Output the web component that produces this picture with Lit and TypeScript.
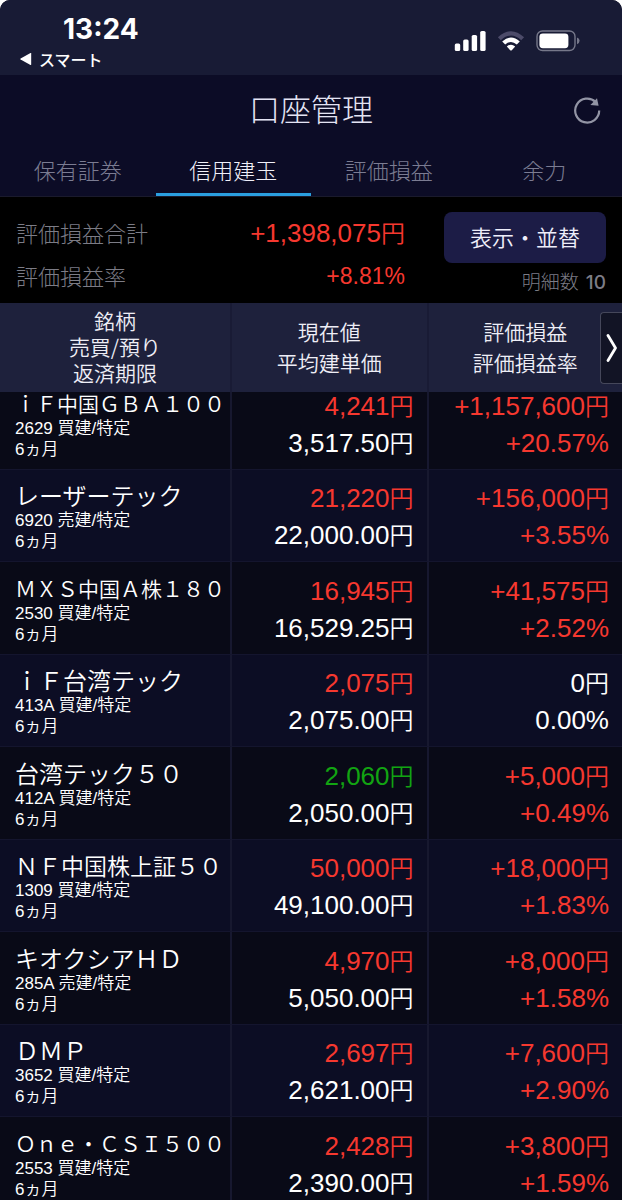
import { LitElement, html, css } from "lit";
import { customElement, property, state } from "lit/decorators.js";
import { classMap } from "lit/directives/class-map.js";

type Tone = "up" | "down" | "flat";

interface Position {
  name: string;
  code: string;
  side: string;
  term: string;
  price: string;
  priceTone: Tone;
  cost: string;
  gain: string;
  rate: string;
  gainTone: Tone;
}

const row = (
  name: string,
  code: string,
  side: string,
  price: string,
  priceTone: Tone,
  cost: string,
  gain: string,
  rate: string,
  gainTone: Tone
): Position => ({ name, code, side, term: "6ヵ月", price, priceTone, cost, gain, rate, gainTone });

const POSITIONS: Position[] = [
  row("ｉＦ中国ＧＢＡ１００", "2629", "買建/特定", "4,241", "up", "3,517.50", "+1,157,600", "+20.57%", "up"),
  row("レーザーテック", "6920", "売建/特定", "21,220", "up", "22,000.00", "+156,000", "+3.55%", "up"),
  row("ＭＸＳ中国Ａ株１８０", "2530", "買建/特定", "16,945", "up", "16,529.25", "+41,575", "+2.52%", "up"),
  row("ｉＦ台湾テック", "413A", "買建/特定", "2,075", "up", "2,075.00", "0", "0.00%", "flat"),
  row("台湾テック５０", "412A", "買建/特定", "2,060", "down", "2,050.00", "+5,000", "+0.49%", "up"),
  row("ＮＦ中国株上証５０", "1309", "買建/特定", "50,000", "up", "49,100.00", "+18,000", "+1.83%", "up"),
  row("キオクシアＨＤ", "285A", "売建/特定", "4,970", "up", "5,050.00", "+8,000", "+1.58%", "up"),
  row("ＤＭＰ", "3652", "買建/特定", "2,697", "up", "2,621.00", "+7,600", "+2.90%", "up"),
  row("Ｏｎｅ・ＣＳＩ５００", "2553", "買建/特定", "2,428", "up", "2,390.00", "+3,800", "+1.59%", "up"),
];

const TABS = ["保有証券", "信用建玉", "評価損益", "余力"];

@customElement("status-bar")
class StatusBar extends LitElement {
  static styles = css`
    :host {
      display: flex;
      justify-content: space-between;
      box-sizing: border-box;
      height: 75px;
      padding: 13px 42px 0 20px;
      background: #181b35;
      color: #fff;
    }
    .time {
      padding-left: 43px;
      font: 700 28px/32px Inter, "Liberation Sans", sans-serif;
    }
    .back {
      display: flex;
      align-items: center;
      gap: 6px;
      color: inherit;
      text-decoration: none;
      font: 500 16px/28px "Noto Sans CJK JP", sans-serif;
    }
    .icons {
      display: flex;
      align-items: center;
      gap: 11px;
      height: 56px;
    }
  `;

  render() {
    return html`
      <div>
        <div class="time">13:24</div>
        <a class="back" href="#">
          <svg width="13" height="12" viewBox="0 0 13 12" fill="#fff" aria-hidden="true">
            <path d="M11.2.4v11.2q0 .6-.7.3L.6 6.5Q0 6 .6 5.5L10.5.1q.7-.3.7.3z" />
          </svg>
          スマート
        </a>
      </div>
      <div class="icons">
        <svg width="32" height="20" viewBox="0 0 32 20" fill="#fff" aria-hidden="true">
          <rect x="0.8" y="12.5" width="5.4" height="7.5" rx="1.6" />
          <rect x="9.2" y="8.5" width="5.4" height="11.5" rx="1.6" />
          <rect x="17.7" y="4" width="5.4" height="16" rx="1.6" />
          <rect x="26.2" y="0" width="5.4" height="20" rx="1.6" />
        </svg>
        <svg width="28" height="20" viewBox="0 0 28 20" aria-hidden="true">
          <path d="M.9 6.2Q14-5.9 27.1 6.2L24.2 9.2Q14.1-.1 3.8 9.2z" fill="#4c4b69" />
          <path d="M5.2 10.5Q14 2.6 22.8 10.5L19.8 13.5Q14 8.4 8.2 13.5z" fill="#fff" />
          <path d="M9.8 15.4Q14 12 18.2 15.4L14.8 19.2Q14 19.9 13.2 19.2z" fill="#fff" />
        </svg>
        <svg width="44" height="22" viewBox="0 0 44 22" fill="none" aria-hidden="true">
          <rect x="1" y="1" width="38" height="19.5" rx="5.5" stroke="#76788a" stroke-width="1.4" />
          <rect x="3.4" y="3.4" width="29" height="14.8" rx="3.4" fill="#fff" />
          <path d="M41 7.4Q43.6 8.4 43.6 10.8T41 14.2z" fill="#76788a" />
        </svg>
      </div>
    `;
  }
}

@customElement("position-table")
class PositionTable extends LitElement {
  @property({ attribute: false }) positions: Position[] = [];

  static styles = css`
    :host {
      display: block;
      position: relative;
    }
    .grid {
      width: 100%;
      table-layout: fixed;
      border-collapse: separate;
      border-spacing: 0;
    }
    .name-col {
      width: 37.3%;
    }
    .price-col {
      width: 31.6%;
    }
    th,
    td {
      box-sizing: border-box;
      border-right: 2px solid #17182f;
    }
    th:last-child,
    td:last-child {
      border-right: 0;
    }
    th {
      height: 89px;
      padding: 0 0 2px;
      background: #1e213c;
      border-color: #191b35;
      color: #eeeef6;
      font-weight: 350;
      font-size: 21px;
      line-height: 31px;
      text-align: center;
    }
    th.tight {
      padding-bottom: 4px;
      line-height: 26px;
    }
    td {
      height: 93px;
      padding: 0 13px 9px 15px;
      vertical-align: bottom;
      background: #090a17;
      border-bottom: 1px solid #14152e;
      color: #fff;
    }
    tr:nth-child(even) td {
      height: 92px;
      background: #0c0d24;
    }
    tr:first-child td {
      height: 78px;
    }
    .name {
      margin-bottom: 5px;
      font-size: 24px;
      line-height: 20px;
      white-space: nowrap;
    }
    .name.long {
      font-size: 23px;
    }
    .name.longest {
      font-size: 21px;
    }
    .meta {
      font-size: 17px;
      line-height: 21px;
      font-family: "Liberation Sans", "Noto Sans CJK JP", sans-serif;
    }
    .num {
      padding-bottom: 13px;
      text-align: right;
      font-family: "Liberation Sans", "Noto Sans CJK JP", sans-serif;
      font-size: 26px;
      line-height: 26px;
    }
    .amount {
      margin-bottom: 11px;
    }
    .amount:last-child {
      margin-bottom: 0;
    }
    .yen {
      font-size: 24px;
      line-height: 20px;
    }
    .up {
      color: #f6382f;
    }
    .down {
      color: #12a412;
    }
    .next {
      position: absolute;
      top: 9px;
      right: 0;
      display: flex;
      align-items: center;
      justify-content: center;
      width: 22px;
      height: 72px;
      padding: 0;
      border: 1px solid #45475a;
      border-right: 0;
      border-radius: 4px 0 0 4px;
      background: #121425;
    }
  `;

  private amount(value: string, tone: Tone) {
    return html`<div class=${classMap({ amount: true, [tone]: true })}>${value}<span class="yen">円</span></div>`;
  }

  render() {
    return html`
      <table class="grid">
        <thead>
          <tr>
            <th class="name-col tight" scope="col">銘柄<br />売買/預り<br />返済期限</th>
            <th class="price-col" scope="col">現在値<br />平均建単価</th>
            <th scope="col">評価損益<br />評価損益率</th>
          </tr>
        </thead>
        <tbody>
          ${this.positions.map(
            (p) => html`
              <tr>
                <td>
                  <div class=${classMap({ name: true, long: p.name.length === 9, longest: p.name.length > 9 })}>
                    ${p.name}
                  </div>
                  <div class="meta">${p.code} ${p.side}</div>
                  <div class="meta">${p.term}</div>
                </td>
                <td class="num">${this.amount(p.price, p.priceTone)}${this.amount(p.cost, "flat")}</td>
                <td class="num">
                  ${this.amount(p.gain, p.gainTone)}
                  <div class=${p.gainTone}>${p.rate}</div>
                </td>
              </tr>
            `
          )}
        </tbody>
      </table>
      <button class="next" aria-label="次の列">
        <svg width="12" height="28" viewBox="0 0 12 28" fill="none" aria-hidden="true">
          <path d="M2 1.5L9.5 14L2 26.5" stroke="#fff" stroke-width="2.8" stroke-linejoin="round" stroke-linecap="round" />
        </svg>
      </button>
    `;
  }
}

@customElement("app-root")
class AppRoot extends LitElement {
  @state() private active = 1;

  static styles = css`
    :host {
      display: block;
      height: 100vh;
      overflow: hidden;
      background: #090a17;
      border-radius: 10px 10px 0 0;
      font-family: "Noto Sans CJK JP", sans-serif;
      font-weight: 350;
    }
    button {
      font: inherit;
      cursor: pointer;
    }
    .title-bar {
      display: grid;
      grid-template-columns: 1fr auto 1fr;
      align-items: center;
      box-sizing: border-box;
      height: 72px;
      padding: 0 20px 2px;
      background: #0c0c26;
    }
    h1 {
      grid-column: 2;
      margin: 0;
      padding-bottom: 4px;
      color: #e4e4f4;
      font-size: 31px;
      line-height: 44px;
      font-weight: 300;
    }
    .reload {
      justify-self: end;
      display: flex;
      padding: 0;
      border: 0;
      background: none;
    }
    .tabs {
      display: flex;
      background: #0c0c26;
      border-bottom: 1px solid #1a1a2c;
    }
    .tab {
      flex: 1;
      height: 49px;
      padding: 0 0 2px;
      border: 0;
      border-bottom: 3px solid transparent;
      background: none;
      color: #7b7c92;
      font-size: 22px;
      font-weight: 300;
      line-height: 44px;
    }
    .tab.on {
      color: #f0f0fa;
      border-color: #2a9fe0;
    }
    .summary {
      display: flex;
      justify-content: space-between;
      gap: 39px;
      padding: 15px 16px 5px;
      background: #000;
    }
    .totals {
      flex: 1;
      margin: 0;
    }
    .line {
      display: flex;
      justify-content: space-between;
      align-items: center;
      height: 43px;
    }
    dt {
      padding-bottom: 4px;
      color: #7c7c86;
      font-size: 22px;
      font-weight: 300;
    }
    dd {
      margin: 0;
      color: #f6382f;
      font-family: "Liberation Sans", "Noto Sans CJK JP", sans-serif;
      font-size: 26px;
      line-height: 43px;
    }
    .yen {
      font-size: 24px;
      line-height: 24px;
    }
    .rate {
      font-size: 23px;
    }
    .side {
      display: flex;
      flex-direction: column;
      align-items: flex-end;
      gap: 4px;
    }
    .sort {
      height: 51px;
      padding: 0 26px 4px;
      border: 0;
      border-radius: 8px;
      background: #1c1c46;
      color: #eeeefa;
      font-size: 22px;
    }
    .count {
      color: #7c7c86;
      font-size: 19px;
      font-weight: 300;
      line-height: 28px;
    }
    .count b {
      margin-left: 3px;
      font: 500 19px/28px Inter, "Liberation Sans", sans-serif;
    }
  `;

  render() {
    return html`
      <status-bar></status-bar>
      <header class="title-bar">
        <h1>口座管理</h1>
        <button class="reload" aria-label="更新">
          <svg width="28" height="28" viewBox="0 0 28 28" fill="none" aria-hidden="true">
            <path d="M25.2 14.6A12 12 0 1 1 21.6 6" stroke="#9294a4" stroke-width="2.2" />
            <path d="M23 2.2L24.6 9.8L16.4 9z" fill="#9294a4" />
          </svg>
        </button>
      </header>
      <nav class="tabs" role="tablist">
        ${TABS.map(
          (label, i) => html`
            <button
              role="tab"
              aria-selected=${i === this.active}
              class=${classMap({ tab: true, on: i === this.active })}
              @click=${() => (this.active = i)}
            >${label}</button>
          `
        )}
      </nav>
      <section class="summary">
        <dl class="totals">
          <div class="line">
            <dt>評価損益合計</dt>
            <dd>+1,398,075<span class="yen">円</span></dd>
          </div>
          <div class="line">
            <dt>評価損益率</dt>
            <dd class="rate">+8.81%</dd>
          </div>
        </dl>
        <div class="side">
          <button class="sort">表示・並替</button>
          <div class="count">明細数 <b>10</b></div>
        </div>
      </section>
      <position-table .positions=${POSITIONS}></position-table>
    `;
  }
}
